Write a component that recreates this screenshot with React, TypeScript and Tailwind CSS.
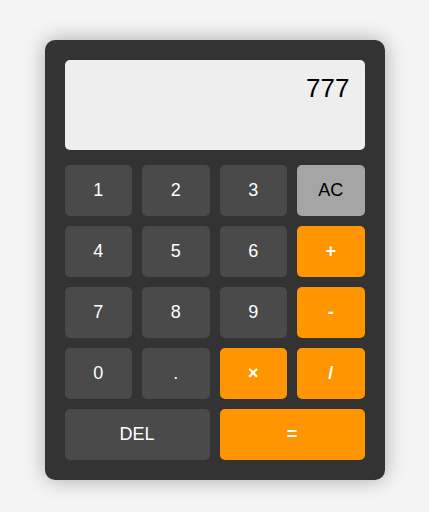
import React from "react";

const base = "rounded-[5px] h-[51px] flex items-center justify-center text-[18px] leading-[1.15]";
const btn = `${base} text-white bg-[#4a4a4a]`;
const op = `${base} text-white font-bold bg-[#ff9500]`;

export default function App() {
  return (
    <div className="min-h-[512px] bg-[#f4f4f4] flex justify-center pt-[40px]" style={{ fontFamily: '"Liberation Sans", Arial, sans-serif' }}>
      <div className="w-[340px] h-[440px] bg-[#333333] rounded-[10px] p-[20px] shadow-[0_0_20px_rgba(0,0,0,0.3)]">
        <div className="h-[90px] bg-[#eeeeee] rounded-[5px] px-[15px] pt-[14px] text-right text-[26px] leading-[1.15] text-black mb-[15px]">
          777
        </div>
        <div className="grid grid-cols-4 gap-[10px]">
          <div className={btn}>1</div>
          <div className={btn}>2</div>
          <div className={btn}>3</div>
          <div className={`${base} text-black bg-[#a5a5a5]`}>AC</div>
          <div className={btn}>4</div>
          <div className={btn}>5</div>
          <div className={btn}>6</div>
          <div className={op}>+</div>
          <div className={btn}>7</div>
          <div className={btn}>8</div>
          <div className={btn}>9</div>
          <div className={op}>-</div>
          <div className={btn}>0</div>
          <div className={btn}>.</div>
          <div className={op}>×</div>
          <div className={op}>/</div>
          <div className={`${btn} col-span-2`}>DEL</div>
          <div className={`${op} col-span-2`}>=</div>
        </div>
      </div>
    </div>
  );
}
